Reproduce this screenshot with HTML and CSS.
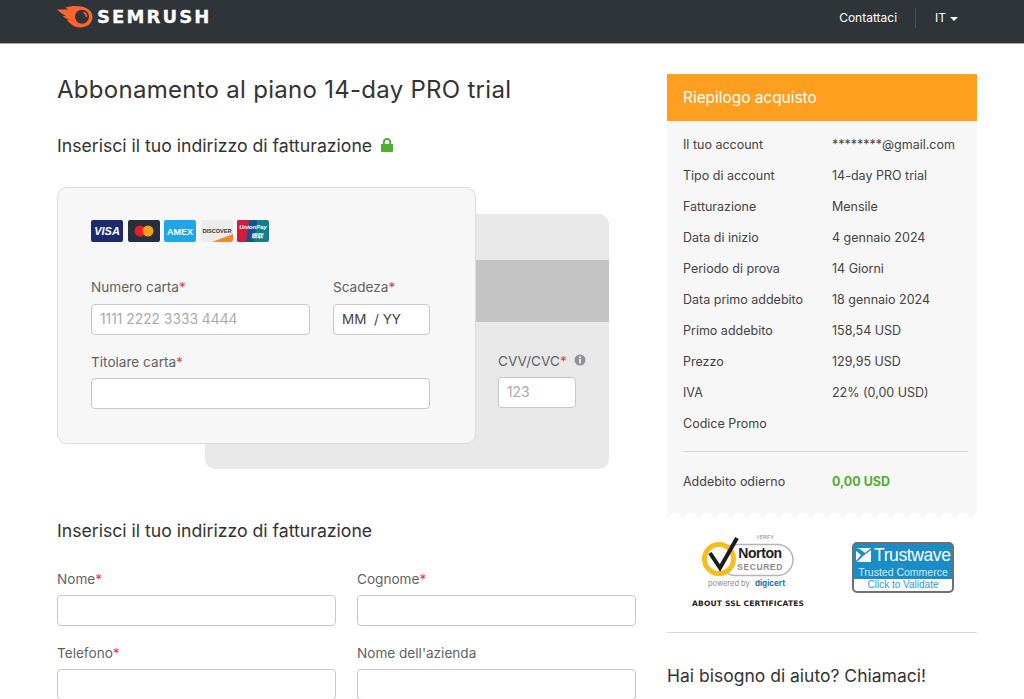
FILE: index.html
```html
<!DOCTYPE html>
<html lang="it">
<head>
<meta charset="utf-8">
<title>Semrush</title>
<link rel="stylesheet" href="styles.css">
</head>
<body>
<header class="topbar">
  <div class="logo">
    <svg class="logo-mark" width="36" height="22" viewBox="0 0 36 22">
      <path fill="#ff642d" d="M0 3.500h11L8.500 1.500c3-1 6.500-1.500 10-1.500C29 0 35.500 4 35.500 11S29 21.500 23.500 21.500c-3.500 0-7-1-9.500-3.500L10 14.500l2-.5L5.500 10.500l3.500-.5L4 7z"/>
      <circle cx="25" cy="10.700" r="7" fill="#2f3439"/>
      <path d="M26.500 6.500a4.500 4.500 0 0 1 3 4.500" stroke="#ff642d" stroke-width="1.600" fill="none"/>
    </svg>
    <span class="logo-text">SEMRUSH</span>
  </div>
  <nav class="topnav">
    <span class="contact">Contattaci</span>
    <span class="lang">IT <i class="caret"></i></span>
  </nav>
</header>

<div class="page">
  <main class="left">
    <h1>Abbonamento al piano 14-day PRO trial</h1>
    <h2 class="sub"><span class="sub-text">Inserisci il tuo indirizzo di fatturazione</span>
      <svg class="lock" width="12" height="14" viewBox="0 0 12 14"><path fill="#4fae33" d="M0 6h1.800V4.200a4.200 4.200 0 0 1 8.400 0V6H12v7a1 1 0 0 1-1 1H1a1 1 0 0 1-1-1zM3.800 6h4.400V4.200a2.200 2.200 0 0 0-4.400 0z"/></svg>
    </h2>

    <section class="cards">
      <div class="card-back">
        <div class="stripe"></div>
        <div class="cvv">
          <label class="lab">CVV/CVC<em>*</em>
            <svg class="info" width="12" height="12" viewBox="0 0 12 12"><circle cx="6" cy="6" r="5.500" fill="#8f9396"/><rect x="5" y="5" width="2" height="4.500" fill="#e8e8e8"/><rect x="5" y="2.500" width="2" height="1.700" fill="#e8e8e8"/></svg>
          </label>
          <div class="input cvv-input ph">123</div>
        </div>
      </div>
      <div class="card-front">
        <div class="brands">
          <svg width="32" height="22" viewBox="0 0 32 22"><rect width="32" height="22" rx="2" fill="#1a2a6c"/><text x="16" y="15" class="b-visa">VISA</text></svg>
          <svg width="32" height="22" viewBox="0 0 32 22"><rect width="32" height="22" rx="2" fill="#25303c"/><circle cx="12" cy="11" r="5.500" fill="#eb1c26"/><circle cx="20" cy="11" r="5.500" fill="#f79e1b"/></svg>
          <svg width="32" height="22" viewBox="0 0 32 22"><rect width="32" height="22" rx="2" fill="#1ea7e8"/><text x="16" y="14.500" class="b-amex">AMEX</text></svg>
          <svg width="32" height="22" viewBox="0 0 32 22"><rect width="32" height="22" rx="2" fill="#ececec"/><path d="M11 22 32 14v6a2 2 0 0 1-2 2z" fill="#f5892a"/><text x="16" y="12.500" class="b-disc">DISCOVER</text></svg>
          <svg width="32" height="22" viewBox="0 0 32 22"><rect width="32" height="22" rx="2" fill="#0f7f8c"/><path d="M2 0h10L9 22H2a2 2 0 0 1-2-2V2a2 2 0 0 1 2-2z" fill="#d8193f"/><path d="M12 0h8l-3 22H9z" fill="#1d4f8f"/><text x="16" y="9" class="b-up">UnionPay</text><text x="20" y="18" class="b-up">银联</text></svg>
        </div>
        <div class="row r1">
          <div class="field f-num">
            <label class="lab">Numero carta<em>*</em></label>
            <div class="input ph">1111 2222 3333 4444</div>
          </div>
          <div class="field f-exp">
            <label class="lab">Scadeza<em>*</em></label>
            <div class="input val">MM &nbsp;/ YY</div>
          </div>
        </div>
        <div class="field f-name">
          <label class="lab">Titolare carta<em>*</em></label>
          <div class="input"></div>
        </div>
      </div>
    </section>

    <h2 class="sub2">Inserisci il tuo indirizzo di fatturazione</h2>
    <div class="grid2">
      <div class="field"><label class="lab">Nome<em>*</em></label><div class="input"></div></div>
      <div class="field"><label class="lab">Cognome<em>*</em></label><div class="input"></div></div>
      <div class="field"><label class="lab">Telefono<em>*</em></label><div class="input"></div></div>
      <div class="field"><label class="lab">Nome dell'azienda</label><div class="input"></div></div>
    </div>
  </main>

  <aside class="right">
    <div class="sum-head">Riepilogo acquisto</div>
    <dl class="sum">
      <div class="line"><dt>Il tuo account</dt><dd>********@gmail.com</dd></div>
      <div class="line"><dt>Tipo di account</dt><dd>14-day PRO trial</dd></div>
      <div class="line"><dt>Fatturazione</dt><dd>Mensile</dd></div>
      <div class="line"><dt>Data di inizio</dt><dd>4 gennaio 2024</dd></div>
      <div class="line"><dt>Periodo di prova</dt><dd>14 Giorni</dd></div>
      <div class="line"><dt>Data primo addebito</dt><dd>18 gennaio 2024</dd></div>
      <div class="line"><dt>Primo addebito</dt><dd>158,54 USD</dd></div>
      <div class="line"><dt>Prezzo</dt><dd>129,95 USD</dd></div>
      <div class="line"><dt>IVA</dt><dd>22% (0,00 USD)</dd></div>
      <div class="line"><dt>Codice Promo</dt><dd></dd></div>
      <div class="line total"><dt>Addebito odierno</dt><dd>0,00 USD</dd></div>
    </dl>
    <div class="scallop"></div>
    <div class="seals">
      <div class="norton">
        <svg width="96" height="62" viewBox="0 0 96 62">
          <text x="66" y="7" class="n-verify">VERIFY</text>
          <rect x="21" y="12.500" width="73" height="31" rx="15.500" fill="#fff" stroke="#b5b5b5" stroke-width="1.500"/>
          <circle cx="20" cy="27" r="14.500" fill="#fff" stroke="#f7bd1c" stroke-width="5"/>
          <path d="M11 21l10 15L38 6" fill="none" stroke="#1c1c1c" stroke-width="4"/>
          <text x="61" y="26" class="n-name">Norton</text>
          <text x="61" y="38" class="n-sec">SECURED</text>
          <text x="9" y="54" class="n-pow">powered by</text>
          <text x="71" y="54" class="n-dig">digicert</text>
        </svg>
        <div class="ssl">ABOUT SSL CERTIFICATES</div>
      </div>
      <div class="trust">
        <div class="trust-top">
          <svg width="15" height="14" viewBox="0 0 15 14"><path fill="#fff" d="M0 0h15L9 5 4 1h0zM0 3l5 4-5 6zM7 8l8-6v12H1z"/></svg>
          <span class="t-name">Trustwave</span>
        </div>
        <div class="t-sub">Trusted Commerce</div>
        <div class="t-click">Click to Validate</div>
      </div>
    </div>
    <hr class="rule">
    <h3 class="help">Hai bisogno di aiuto? Chiamaci!</h3>
  </aside>
</div>
</body>
</html>
```
FILE: styles.css
```css
* { box-sizing: border-box; }
html, body { margin: 0; padding: 0; height: 699px; overflow: hidden; background: #fff; }
body { font-family: Inter, "Liberation Sans", sans-serif; color: #333; }

.topbar {
  height: 44px;
  background: #2f3439;
  border-bottom: 1px solid #a9abad;
  display: flex;
  justify-content: space-between;
  padding: 0 66px 0 57px;
  color: #fff;
}
.logo { display: flex; align-items: flex-start; padding-top: 6px; gap: 4px; }
.logo-text { font: 700 18px/22px "DejaVu Sans", sans-serif; letter-spacing: 2.100px; -webkit-text-stroke: .3px #fff; }
.topnav { display: flex; align-items: flex-start; font-size: 12px; }
.contact { line-height: 20px; height: 20px; margin-top: 8px; padding-right: 18px; border-right: 1px solid #4a4f54; }
.lang { margin: 11px 0 0 19px; line-height: 14px; display: flex; align-items: center; gap: 4px; }
.caret { border: 4px solid transparent; border-top-color: #fff; border-bottom: 0; display: block; margin-top: 1px; }

.page { display: flex; padding-left: 57px; }
.left { width: 579px; }
.right { width: 310px; margin-left: 31px; margin-top: 30px; }

h1 { font-size: 24px; font-weight: 400; line-height: 28px; padding-top: 2px; margin: 30px 0 0; letter-spacing: .28px; }
.sub { font-size: 17.650px; font-weight: 400; line-height: 22px; margin: 30px 0 0; display: flex; align-items: center; gap: 9px; }
.sub-text { padding-top: 2px; line-height: 20px; }
.lock { margin-top: -1px; }

.cards { position: relative; height: 282px; margin-top: 31px; }
.card-back {
  position: absolute; left: 148px; top: 27px;
  width: 404px; height: 255px;
  background: #e8e8e8; border-radius: 10px;
  padding-top: 46px;
}
.stripe { height: 62px; background: #c4c4c4; }
.cvv { margin: 29px 0 0 293px; }
.info { vertical-align: 0; margin-left: 3px; }
.cvv-input { width: 78px; }
.card-front {
  position: absolute; left: 0; top: 0;
  width: 419px; height: 257px;
  background: #f7f7f7;
  border: 1px solid #dcdcdc;
  border-radius: 10px;
  padding: 32px 45px 0 33px;
}
.brands { display: flex; gap: 4.500px; height: 22px; }
.brands svg { display: block; }
.b-visa { font: italic 700 11px "Liberation Sans", sans-serif; fill: #fff; text-anchor: middle; }
.b-amex { font: 700 9px "Liberation Sans", sans-serif; fill: #fff; text-anchor: middle; }
.b-disc { font: 700 5.600px "Liberation Sans", sans-serif; fill: #333; text-anchor: middle; }
.b-up { font: italic 700 6px "Liberation Sans", "Noto Sans CJK SC", sans-serif; fill: #fff; text-anchor: middle; }

.row { display: flex; gap: 23px; }
.r1 { margin-top: 35px; }
.r1 .input { margin-top: 7px; }
.field { display: block; }
.f-num { width: 219px; }
.f-exp { width: 97px; }
.f-name { width: 339px; margin-top: 17px; }
.lab { display: block; font-size: 13.600px; line-height: 18px; padding-top: 2px; color: #5f6366; }
.cards .lab { line-height: 20px; padding-top: 0; }
.lab em { font-style: normal; color: #f0393b; }
.input {
  height: 31px; margin-top: 6px;
  background: #fff;
  border: 1px solid #c5c8ca;
  border-radius: 4px;
  font-size: 13.800px; line-height: 28px;
  padding: 0 8px;
}
.ph { color: #aaa; }
.val { color: #444; font-size: 13.500px; }

.sub2 { font-size: 17.650px; font-weight: 400; line-height: 20px; padding-top: 2px; margin: 50px 0 0; }
.grid2 { display: grid; grid-template-columns: 279px 279px; column-gap: 21px; row-gap: 16px; margin-top: 27px; }
.grid2 .input { margin-top: 7px; }

.sum-head { background: #ff9f1f; color: #fff; height: 47px; line-height: 47px; padding-left: 16px; font-size: 15.400px; }
.sum { margin: 0; background: #f7f7f7; padding: 8px 9px 0 16px; height: 392px; }
.line { display: flex; height: 31px; align-items: center; font-size: 12.500px; color: #444; }
.line dt { width: 149px; }
.line dd { margin: 0; }
.total { margin-top: 12px; border-top: 1px solid #d6d6d6; height: 60px; }
.total dd { color: #52ae32; font-weight: 700; }
.scallop {
  height: 8px;
  background: #f7f7f7 radial-gradient(circle at 8px 8px, #fff 0, #fff 7.500px, #f7f7f7 8.500px) 0 0 / 16px 8px repeat-x;
}
.seals { display: flex; height: 100px; margin-top: 11px; }
.norton { width: 160px; padding-left: 32px; }
.norton svg { display: block; }
.n-verify { font: 400 5px Inter, sans-serif; fill: #888; text-anchor: middle; }
.n-name { font: 700 14px "Liberation Sans", sans-serif; fill: #222; text-anchor: middle; letter-spacing: -.4px; }
.n-sec { font: 700 8.500px "Liberation Sans", sans-serif; fill: #8b8b8b; text-anchor: middle; letter-spacing: .6px; }
.n-pow { font: 400 7.500px Inter, sans-serif; fill: #888; }
.n-dig { font: 700 8px Inter, sans-serif; fill: #1f6fc0; text-anchor: middle; }
.ssl { font: 700 7.500px/10px "DejaVu Sans", sans-serif; color: #222; letter-spacing: .2px; margin: 5px 0 0 -7px; white-space: nowrap; }
.trust {
  width: 102px; height: 51px; margin: 10px 0 0 25px;
  background: #1a8cc8;
  border: 2px solid #6d6f71;
  border-radius: 5px;
  overflow: hidden;
  color: #fff;
  display: flex; flex-direction: column;
}
.trust-top { display: flex; align-items: center; gap: 3px; padding-left: 2px; height: 22px; }
.t-name { font: 400 17.500px/20px "Liberation Sans", sans-serif; letter-spacing: -.4px; }
.t-sub { font: 400 10.500px/12px "Liberation Sans", sans-serif; text-align: center; color: #d6ecf7; }
.t-click { margin-top: auto; background: #fff; color: #2a9bd6; font: 400 10px/12px "Liberation Sans", sans-serif; height: 12px; text-align: center; }
.rule { border: 0; border-top: 1px solid #dcdcdc; margin: 0; }
.help { font-size: 17.500px; font-weight: 400; line-height: 20px; padding-top: 2px; margin: 31px 0 0; }
```
